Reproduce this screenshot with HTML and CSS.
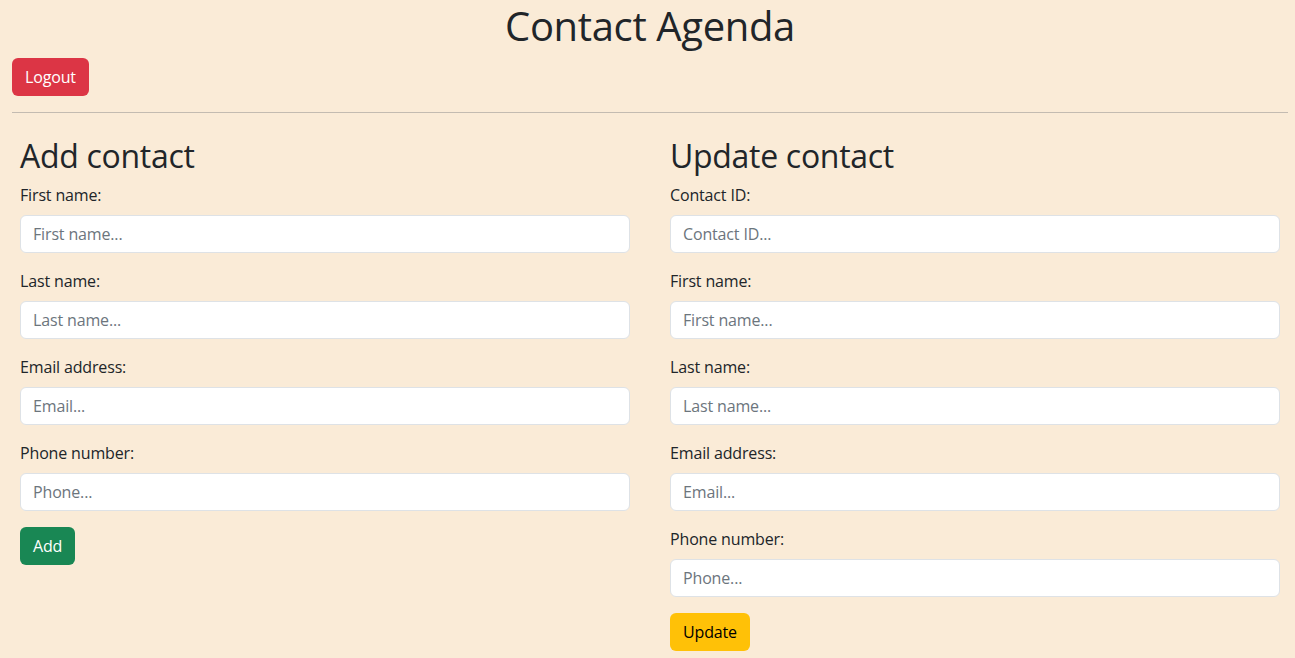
FILE: index.html
```html
<!DOCTYPE html>
<html lang="en">
<head>
<meta charset="utf-8">
<title>Contact Agenda</title>
<link rel="stylesheet" href="styles.css">
</head>
<body>
<header class="top">
  <h1 class="title">Contact Agenda</h1>
  <div class="actions"><button class="btn btn-danger">Logout</button></div>
  <hr class="sep">
</header>
<main class="cols">
  <section class="form-col">
    <h2 class="col-title">Add contact</h2>
    <div class="field"><label class="lbl">First name:</label><input class="inp" placeholder="First name..."></div>
    <div class="field"><label class="lbl">Last name:</label><input class="inp" placeholder="Last name..."></div>
    <div class="field"><label class="lbl">Email address:</label><input class="inp" placeholder="Email..."></div>
    <div class="field"><label class="lbl">Phone number:</label><input class="inp" placeholder="Phone..."></div>
    <div><button class="btn btn-success">Add</button></div>
  </section>
  <section class="form-col">
    <h2 class="col-title">Update contact</h2>
    <div class="field"><label class="lbl">Contact ID:</label><input class="inp" placeholder="Contact ID..."></div>
    <div class="field"><label class="lbl">First name:</label><input class="inp" placeholder="First name..."></div>
    <div class="field"><label class="lbl">Last name:</label><input class="inp" placeholder="Last name..."></div>
    <div class="field"><label class="lbl">Email address:</label><input class="inp" placeholder="Email..."></div>
    <div class="field"><label class="lbl">Phone number:</label><input class="inp" placeholder="Phone..."></div>
    <div><button class="btn btn-warning">Update</button></div>
  </section>
</main>
</body>
</html>
```
FILE: styles.css
```css
* { box-sizing: border-box; }
html, body { margin: 0; }
body {
  background: #faebd7;
  color: #212529;
  font-family: "Open Sans", "Noto Sans", sans-serif;
  font-size: 16px;
  line-height: 1.5;
  letter-spacing: -0.15px;
}
.top { padding: 0 7px 0 12px; }
.title {
  margin: 0;
  padding-top: 3px;
  font-size: 40px;
  font-weight: 400;
  line-height: 45px;
  text-align: center;
  letter-spacing: -0.35px;
}
.actions { margin-top: 10px; }
.sep {
  margin: 16px 0 0;
  border: 0;
  border-top: 1px solid #c3bbb1;
}
.cols {
  display: grid;
  grid-template-columns: 610px 610px;
  gap: 40px;
  padding: 24px 15px 0 20px;
}
.col-title {
  margin: 0 0 8px;
  font-size: 32px;
  font-weight: 400;
  line-height: 38px;
  letter-spacing: -0.3px;
}
.field { margin-bottom: 16px; }
.lbl { display: block; margin-bottom: 8px; line-height: 24px; }
.inp {
  display: block;
  width: 100%;
  height: 38px;
  padding: 6px 12px;
  font: inherit;
  letter-spacing: inherit;
  color: #212529;
  background: #fff;
  border: 1px solid #dee2e6;
  border-radius: 6px;
}
.inp::placeholder { color: #6c757d; }
.btn {
  font: inherit;
  letter-spacing: inherit;
  height: 38px;
  padding: 6px 12px;
  border: 1px solid transparent;
  border-radius: 6px;
  cursor: pointer;
  line-height: 24px;
}
.btn-danger { background: #dc3545; color: #fff; }
.btn-success { background: #198754; color: #fff; }
.btn-warning { background: #ffc107; color: #000; }
```
